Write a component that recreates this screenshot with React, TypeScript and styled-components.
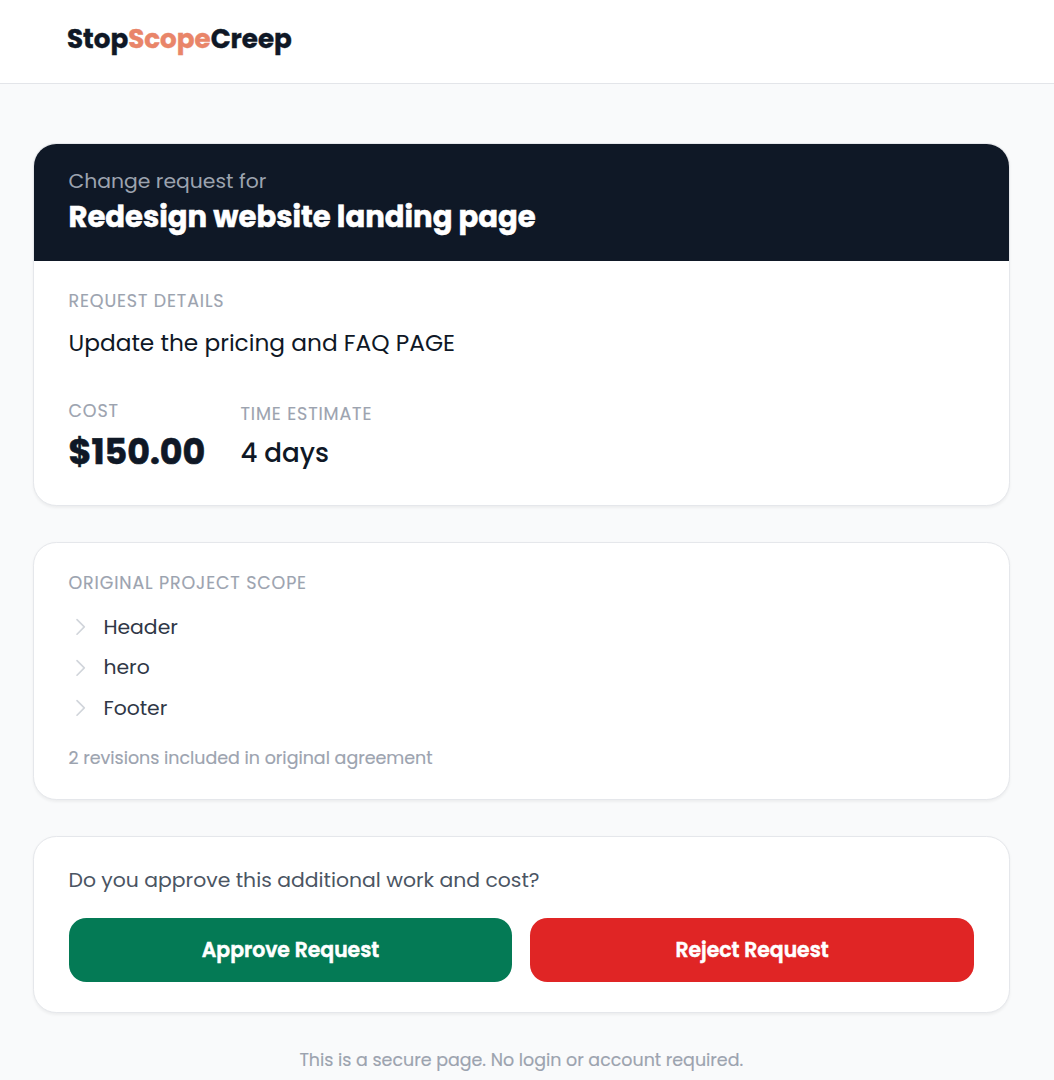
import styled, { createGlobalStyle } from "styled-components";

const GlobalStyle = createGlobalStyle`
  *, *::before, *::after { box-sizing: border-box; }
  body {
    margin: 0;
    background: #f9fafb;
    color: #0f1826;
    font-family: Poppins, Inter, "Open Sans", sans-serif;
  }
  h1, p, ul { margin: 0; padding: 0; }
`;

const Page = styled.div`
  min-height: 1080px;
  overflow: hidden;
`;

const TopBar = styled.header`
  height: 84px;
  padding: 18.5px 67px 0;
  background: #fff;
  border-bottom: 1px solid #e3e5e9;
`;

const Logo = styled.div`
  font-size: 26.18px;
  line-height: 40px;
  font-weight: 700;
  -webkit-text-stroke: 0.4px;
`;

const Accent = styled.span`
  color: #e98569;
`;

const Main = styled.main`
  display: flex;
  flex-direction: column;
  gap: 36px;
  padding: 59px 44.5px 0 33px;
`;

const Card = styled.section`
  overflow: hidden;
  background: #fff;
  border: 1px solid #e5e7eb;
  border-radius: 23.3px;
  box-shadow: 0 1.5px 3px rgba(0, 0, 0, 0.05);
`;

const CardHeader = styled.div`
  margin: 0 -0.5px;
  padding: 22px 35px 24px;
  background: #0f1826;
`;

const Eyebrow = styled.p`
  color: #9ca3af;
  font-size: 20.36px;
  line-height: 30px;
`;

const Title = styled.h1`
  margin-top: 0.7px;
  color: #fff;
  font-size: 29.09px;
  line-height: 40px;
  font-weight: 700;
  -webkit-text-stroke: 0.5px;
`;

const CardBody = styled.div<{ $bottom: number }>`
  padding: 28.3px 34.5px ${(p) => p.$bottom}px;
`;

const Label = styled.p`
  color: #9ca3af;
  font-size: 17.45px;
  line-height: 24px;
  letter-spacing: 0.05em;
  text-transform: uppercase;
  -webkit-text-stroke: 0.15px;
`;

const Description = styled.p`
  margin-top: 12.3px;
  font-size: 23.27px;
  line-height: 36px;
`;

const Estimates = styled.div`
  display: grid;
  grid-template-columns: 137px auto;
  column-gap: 35px;
  align-items: end;
  margin-top: 37.7px;
`;

const Cost = styled.p`
  margin-top: 8.1px;
  font-size: 34.9px;
  line-height: 42px;
  font-weight: 700;
  -webkit-text-stroke: 0.6px;
`;

const Duration = styled.p`
  margin-top: 7.1px;
  font-size: 26.18px;
  line-height: 40px;
  font-weight: 500;
`;

const ScopeList = styled.ul`
  display: flex;
  flex-direction: column;
  gap: 10.5px;
  margin-top: 16.6px;
  list-style: none;
`;

const ScopeItem = styled.li`
  display: flex;
  align-items: center;
  gap: 11.6px;
  color: #2f3746;
  font-size: 20.36px;
  line-height: 30px;
`;

const Chevron = styled.svg`
  width: 23.3px;
  height: 23.3px;
  fill: none;
  stroke: #d1d5db;
  stroke-width: 1.7;
  stroke-linecap: round;
  stroke-linejoin: round;
`;

const Note = styled.p`
  margin-top: 22.7px;
  color: #9ca3af;
  font-size: 17.45px;
  line-height: 24px;
  -webkit-text-stroke: 0.15px;
`;

const Question = styled.p`
  color: #4b5563;
  font-size: 20.36px;
  line-height: 30px;
`;

const Actions = styled.div`
  display: grid;
  grid-template-columns: 1fr 1fr;
  gap: 17.6px;
  margin-top: 23.4px;
`;

const ActionButton = styled.button<{ $danger?: boolean }>`
  height: 64px;
  padding: 0 0 1px;
  border: 0;
  border-radius: 17.45px;
  background: ${(p) => (p.$danger ? "#e02525" : "#047a55")};
  color: #fff;
  font-family: inherit;
  font-size: 20.36px;
  font-weight: 600;
  -webkit-text-stroke: 0.5px;
`;

const Footnote = styled.p`
  margin-top: -1px;
  color: #9ca3af;
  font-size: 17.45px;
  line-height: 24px;
  text-align: center;
  -webkit-text-stroke: 0.15px;
`;

const scope = ["Header", "hero", "Footer"];

export default function App() {
  return (
    <Page>
      <GlobalStyle />
      <TopBar>
        <Logo>
          Stop<Accent>Scope</Accent>Creep
        </Logo>
      </TopBar>
      <Main>
        <Card>
          <CardHeader>
            <Eyebrow>Change request for</Eyebrow>
            <Title>Redesign website landing page</Title>
          </CardHeader>
          <CardBody $bottom={31.9}>
            <Label>Request details</Label>
            <Description>Update the pricing and FAQ PAGE</Description>
            <Estimates>
              <div>
                <Label>Cost</Label>
                <Cost>$150.00</Cost>
              </div>
              <div>
                <Label>Time estimate</Label>
                <Duration>4 days</Duration>
              </div>
            </Estimates>
          </CardBody>
        </Card>
        <Card>
          <CardBody $bottom={29}>
            <Label>Original project scope</Label>
            <ScopeList>
              {scope.map((item) => (
                <ScopeItem key={item}>
                  <Chevron viewBox="0 0 24 24">
                    <path d="M8.25 4.8 15.75 12.3 8.25 19.8" />
                  </Chevron>
                  {item}
                </ScopeItem>
              ))}
            </ScopeList>
            <Note>2 revisions included in original agreement</Note>
          </CardBody>
        </Card>
        <Card>
          <CardBody $bottom={29.4}>
            <Question>Do you approve this additional work and cost?</Question>
            <Actions>
              <ActionButton>Approve Request</ActionButton>
              <ActionButton $danger>Reject Request</ActionButton>
            </Actions>
          </CardBody>
        </Card>
        <Footnote>This is a secure page. No login or account required.</Footnote>
      </Main>
    </Page>
  );
}
